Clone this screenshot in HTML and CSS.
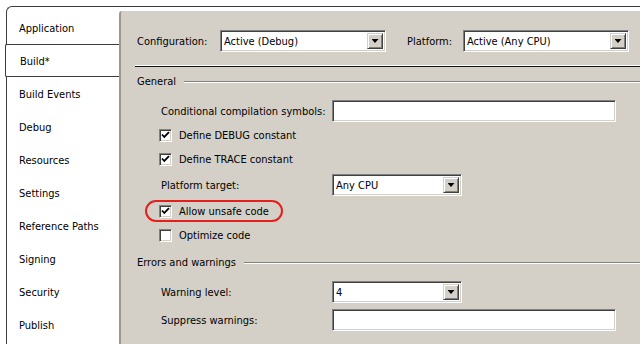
FILE: index.html
```html
<!DOCTYPE html>
<html lang="en">
<head>
    <meta charset="utf-8">
    <title>Build properties</title>
    <link rel="stylesheet" href="styles.css">
</head>
<body>
<div class="frame">
    <ul class="tabs">
        <li>Application</li>
        <li class="active">Build*</li>
        <li>Build Events</li>
        <li>Debug</li>
        <li>Resources</li>
        <li>Settings</li>
        <li>Reference Paths</li>
        <li>Signing</li>
        <li>Security</li>
        <li>Publish</li>
    </ul>
    <div class="panel">
        <div class="topbar">
            <span class="cfg-label">Configuration:</span>
            <div class="combo wide"><span>Active (Debug)</span><i class="drop"></i></div>
            <span class="plat-label">Platform:</span>
            <div class="combo wide"><span>Active (Any CPU)</span><i class="drop"></i></div>
        </div>
        <div class="sep"></div>

        <div class="group general"><span>General</span><i class="rule"></i></div>
        <div class="row first">
            <span class="label">Conditional compilation symbols:</span>
            <div class="textbox"></div>
        </div>
        <div class="row check">
            <span class="box"><svg width="9" height="9" viewBox="0 0 9 9"><polyline points="1,3.5 3.3,6 8,1.2" fill="none" stroke="#000" stroke-width="1.8"/></svg></span>
            Define DEBUG constant
        </div>
        <div class="row check">
            <span class="box"><svg width="9" height="9" viewBox="0 0 9 9"><polyline points="1,3.5 3.3,6 8,1.2" fill="none" stroke="#000" stroke-width="1.8"/></svg></span>
            Define TRACE constant
        </div>
        <div class="row target">
            <span class="label">Platform target:</span>
            <div class="combo small"><span>Any CPU</span><i class="drop"></i></div>
        </div>
        <div class="row check marked">
            <span class="box"><svg width="9" height="9" viewBox="0 0 9 9"><polyline points="1,3.5 3.3,6 8,1.2" fill="none" stroke="#000" stroke-width="1.8"/></svg></span>
            Allow unsafe code
            <span class="ring"></span>
        </div>
        <div class="row check">
            <span class="box"></span>
            Optimize code
        </div>

        <div class="group errors"><span>Errors and warnings</span><i class="rule"></i></div>
        <div class="row tall">
            <span class="label">Warning level:</span>
            <div class="combo small"><span>4</span><i class="drop"></i></div>
        </div>
        <div class="row tall">
            <span class="label">Suppress warnings:</span>
            <div class="textbox"></div>
        </div>
    </div>
</div>
</body>
</html>
```

FILE: styles.css
```css
html, body {
    margin: 0;
    padding: 0;
    background: #fff;
    overflow: hidden;
}
body {
    font-family: "DejaVu Sans Condensed", "DejaVu Sans", "Liberation Sans", sans-serif;
    font-stretch: condensed;
    font-size: 11px;
    color: #000;
}
.frame {
    display: flex;
    margin: 6px 0 0 6px;
    height: 337px;
    border-top: 1px solid #3c3c3c;
    border-left: 1px solid #3c3c3c;
    border-top-left-radius: 6px;
}

/* left tab list */
.tabs {
    list-style: none;
    margin: 0;
    padding: 4px 0 0 0;
    width: 112px;
    flex: none;
}
.tabs li {
    box-sizing: border-box;
    height: 33px;
    padding-top: 2px;
    line-height: 31px;
    padding-left: 12px;
}
.tabs li.active {
    margin-left: -2px;
    padding-left: 14px;
    border-top: 1px solid #3c3c3c;
    border-bottom: 1px solid #3c3c3c;
    border-left: 1px solid #3c3c3c;
    border-top-left-radius: 2px;
    border-bottom-left-radius: 2px;
    background: #fff;
    line-height: 29px;
}

/* right side */
.panel {
    flex: 1;
    margin-top: 4px;
    background: #d4d0c8;
    border-left: 2px solid #9c9890;
    border-top-left-radius: 3px;
}
.topbar {
    box-sizing: border-box;
    height: 54px;
    padding: 19px 0 0 16px;
    display: flex;
    align-items: flex-start;
}
.cfg-label {
    width: 83px;
    line-height: 23px;
}
.plat-label {
    width: 56px;
    margin-left: 21px;
    line-height: 23px;
}
.sep {
    margin-left: 14px;
    border-top: 1px solid #fff;
    border-bottom: 1px solid #111;
}

.group {
    display: flex;
    align-items: center;
    padding-left: 16px;
}
.group .rule {
    flex: 1;
    margin-left: 8px;
    border-top: 1px solid #808080;
    border-bottom: 1px solid #fff;
}
.general {
    height: 29px;
}
.errors {
    height: 31px;
}

.row {
    display: flex;
    align-items: center;
    height: 24px;
    padding-left: 40px;
    position: relative;
}
.row.first {
    margin-top: 3px;
}
.row.target {
    height: 28px;
}
.row.tall {
    height: 28px;
}
.row.check {
    padding-left: 38px;
}
.label {
    width: 171px;
}

/* classic sunken controls */
.textbox, .combo, .box {
    box-sizing: border-box;
    background: #fff;
    border: 1px solid;
    border-color: #808080 #fff #fff #808080;
    box-shadow: inset 1px 1px #404040, inset -1px -1px #d4d0c8;
}
.textbox {
    width: 284px;
    height: 22px;
}
.combo {
    display: flex;
    align-items: center;
    height: 22px;
    padding: 2px;
}
.combo span {
    flex: 1;
    padding-left: 1px;
}
.combo.wide {
    width: 166px;
}
.combo.small {
    width: 130px;
}
.drop {
    box-sizing: border-box;
    width: 16px;
    height: 16px;
    display: flex;
    align-items: center;
    justify-content: center;
    background: #d4d0c8;
    border: 1px solid;
    border-color: #d4d0c8 #404040 #404040 #d4d0c8;
    box-shadow: inset 1px 1px #fff, inset -1px -1px #808080;
}
.drop::after {
    content: "";
    width: 7px;
    height: 4px;
    background: #000;
    clip-path: polygon(0 0, 100% 0, 50% 100%);
}
.box {
    width: 13px;
    height: 13px;
    margin-right: 7px;
    display: flex;
    align-items: center;
    justify-content: center;
}

/* red annotation round the unsafe option */
.ring {
    position: absolute;
    left: 24px;
    top: 1px;
    width: 138px;
    height: 22px;
    box-sizing: border-box;
    border: 2px solid #e3201e;
    border-radius: 12px;
}
```
